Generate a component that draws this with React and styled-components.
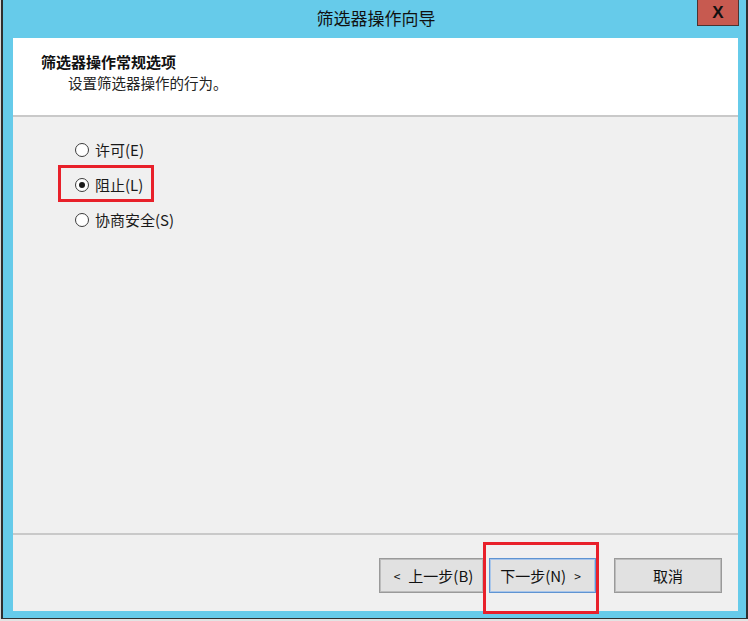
import React from "react";
import styled, { createGlobalStyle } from "styled-components";

const Global = createGlobalStyle`
  html, body { margin: 0; padding: 0; }
  body {
    background: #d9d9d9;
    font-family: "Noto Sans CJK SC", "Noto Sans", sans-serif;
    width: 748px;
    height: 621px;
    overflow: hidden;
  }
`;

const Window = styled.div`
  position: relative;
  margin-left: 1px;
  width: 747px;
  box-sizing: border-box;
  background: #66cbea;
  border-left: 2px solid #2f2f2f;
  border-right: 2px solid #2f2f2f;
  border-bottom: 1px solid #2f2f2f;
  padding: 0 8px 7px 10px;
`;

const TitleBar = styled.div`
  height: 38px;
  display: grid;
  grid-template-columns: 1fr auto 1fr;
  align-items: start;
`;

const Title = styled.div`
  grid-column: 2;
  font-size: 17px;
  line-height: 36px;
  color: #111;
  margin-left: 1px;
`;

const CloseButton = styled.div`
  grid-column: 3;
  justify-self: end;
  margin-right: -1px;
  width: 42px;
  height: 26px;
  box-sizing: border-box;
  background: #c75a50;
  border: 1px solid #4a3432;
  border-top: none;
  display: flex;
  align-items: center;
  justify-content: center;
  font-family: "Liberation Sans", Arial, sans-serif;
  font-weight: bold;
  font-size: 17px;
  color: #111;
`;

const Client = styled.div`
  height: 573px;
  background: #f0f0f0;
  display: flex;
  flex-direction: column;
`;

const Header = styled.div`
  background: #ffffff;
  border-bottom: 2px solid #c9c9c9;
  padding: 13px 0 0 28px;
  height: 64px;
`;

const HeaderTitle = styled.div`
  font-weight: bold;
  font-size: 15px;
  line-height: 22px;
  color: #111;
`;

const HeaderSub = styled.div`
  font-size: 14.5px;
  line-height: 20px;
  color: #222;
  padding-left: 27px;
`;

const Body = styled.div`
  flex: 1;
  position: relative;
  padding: 23px 0 0 62px;
  display: flex;
  flex-direction: column;
  gap: 15px;
`;

const Option = styled.label`
  display: flex;
  align-items: center;
  gap: 6px;
  font-size: 15px;
  line-height: 20px;
  color: #1a1a1a;
  height: 20px;
`;

const Radio = styled.span`
  width: 14px;
  height: 14px;
  box-sizing: border-box;
  border-radius: 50%;
  border: 1px solid #3c3c3c;
  background: #fff;
  display: flex;
  align-items: center;
  justify-content: center;
  &::after {
    content: "";
    width: 6px;
    height: 6px;
    border-radius: 50%;
    background: ${(p) => (p.$checked ? "#1a1a1a" : "transparent")};
  }
`;

const Highlight = styled.div`
  position: absolute;
  border: 3px solid #e8202a;
  box-sizing: border-box;
  pointer-events: none;
`;

const Footer = styled.div`
  border-top: 2px solid #c9c9c9;
  display: flex;
  justify-content: flex-end;
  padding: 23px 16px 0 0;
  box-sizing: border-box;
  height: 78px;
`;

const Button = styled.button`
  height: 35px;
  width: ${(p) => p.$w}px;
  margin-left: ${(p) => p.$gap}px;
  box-sizing: border-box;
  background: #e1e1e1;
  border: 1px solid ${(p) => (p.$default ? "#5f94d2" : "#9a9a9a")};
  box-shadow: inset 0 0 0 1px ${(p) => (p.$default ? "#a9c6ea" : "#bcbcbc")};
  font-family: "Noto Sans CJK SC", "Noto Sans", sans-serif;
  font-size: 15px;
  color: #111;
  padding: 0;
  display: flex;
  align-items: center;
  justify-content: center;
  gap: 4px;
`;

const Chev = styled.span`
  font-size: 12px;
  margin: 0 4px;
`;

const BottomStrip = styled.div`
  height: 2px;
  background: #e3e3e3;
`;

export default function App() {
  return (
    <>
      <Global />
      <Window>
        <TitleBar>
          <Title>筛选器操作向导</Title>
          <CloseButton>X</CloseButton>
        </TitleBar>
        <Client>
          <Header>
            <HeaderTitle>筛选器操作常规选项</HeaderTitle>
            <HeaderSub>设置筛选器操作的行为。</HeaderSub>
          </Header>
          <Body>
            <Option>
              <Radio />
              许可(E)
            </Option>
            <Option>
              <Radio $checked />
              阻止(L)
            </Option>
            <Option>
              <Radio />
              协商安全(S)
            </Option>
            <Highlight style={{ left: 45, top: 48, width: 96, height: 37 }} />
          </Body>
          <Footer>
            <Button $w={105} $gap={0}>
              <Chev>&lt;</Chev>上一步(B)
            </Button>
            <Button $w={107} $gap={5} $default>
              下一步(N)<Chev>&gt;</Chev>
            </Button>
            <Button $w={108} $gap={18}>
              取消
            </Button>
          </Footer>
        </Client>
        <Highlight style={{ left: 480, top: 542, width: 116, height: 72 }} />
      </Window>
      <BottomStrip />
    </>
  );
}
